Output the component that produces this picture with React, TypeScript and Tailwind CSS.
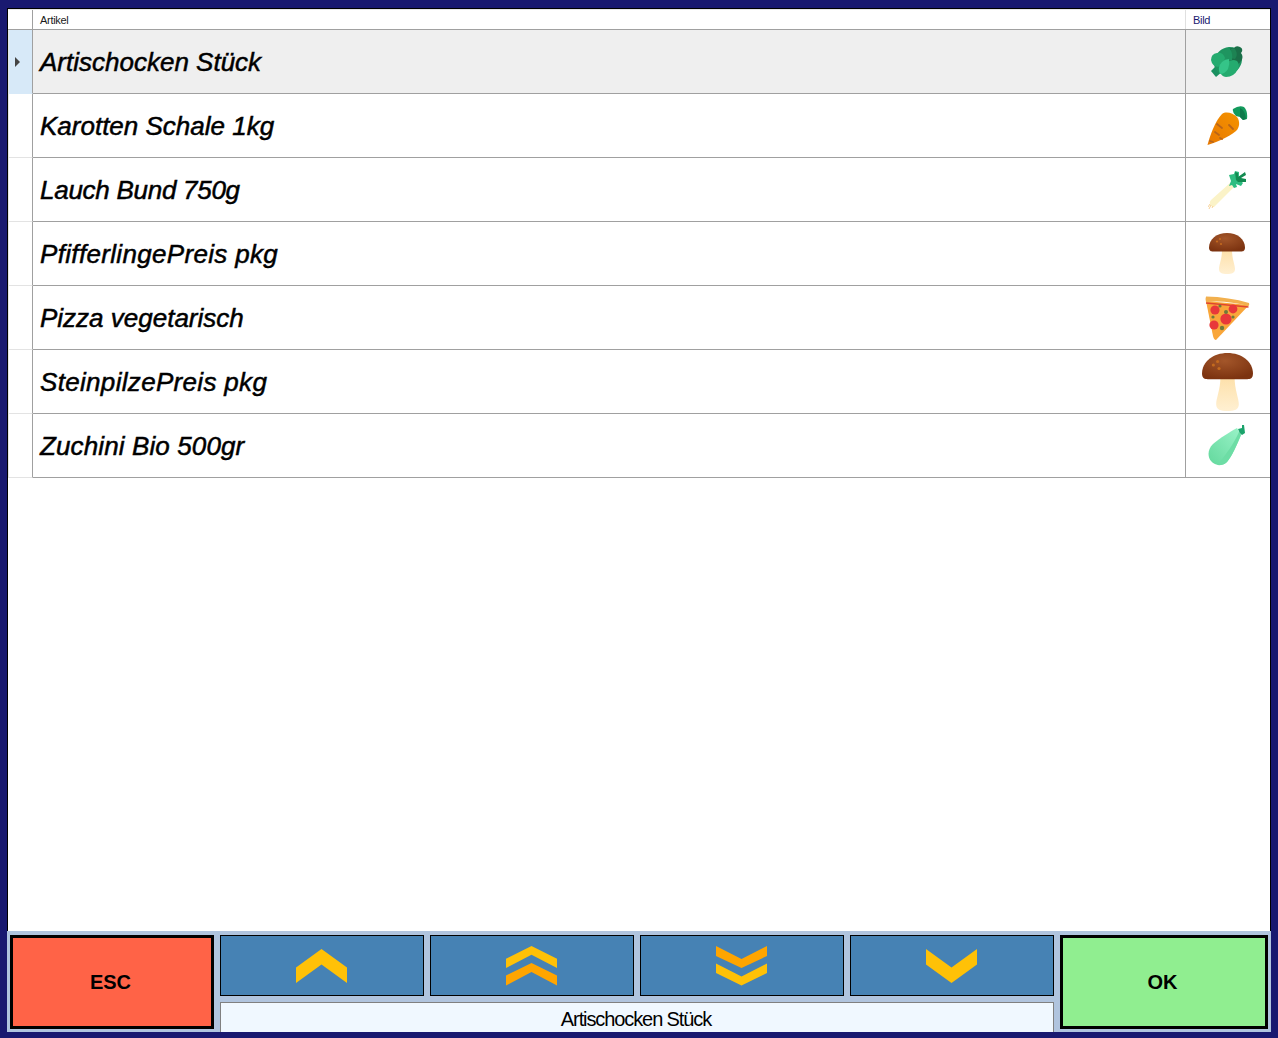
import React from "react";

function Artichoke() {
    return (
        <svg width="32" height="32" viewBox="0 0 32 32">
            <path d="M0 25 L6 19 L12 25 L5 31 Z" fill="#1a9060" />
            <ellipse cx="17" cy="15" rx="15" ry="13" transform="rotate(-45 17 15)" fill="#1e9560" />
            <path d="M17 5 Q19 1 23 2 Q25 -1 29 1 Q33 3 30 7 Q33 11 30 15 Q27 20 21 20 Q16 12 17 5 Z" fill="#1a6f48" />
            <path d="M20 3 Q24 1 25 5 Q27 9 24 13 L19 12 Z" fill="#1d8353" />
            <path d="M10 7 Q14 2 19 3 Q22 7 21 14 L14 14 Z" fill="#1f9560" />
            <path d="M0 14 Q0 8 6 7 Q12 6 14 12 Q13 18 7 21 Q1 20 0 14 Z" fill="#25ab6f" />
            <path d="M15 17 Q21 12 26 15 Q29 18 27 23 Q23 31 15 31 Q10 30 10 27 Z" fill="#25ab6f" />
            <path d="M9 28 Q6 21 11 16 Q14 13 18 13 Q19 18 17 23 Q14 28 9 28 Z" fill="#35c488" />
        </svg>
    );
}

function Carrot() {
    return (
        <svg width="41" height="40" viewBox="0 0 41 40">
            <defs>
                <linearGradient id="carrotBody" x1="0" y1="1" x2="1" y2="0">
                    <stop offset="0" stopColor="#e87800" />
                    <stop offset="1" stopColor="#f59300" />
                </linearGradient>
            </defs>
            <path d="M26 3 Q32 -1 37 1 Q41 5 40 13 L36 14 L33 11 L29 10 Q25 6 26 3 Z" fill="#139a5c" />
            <path d="M33 2 Q38 4 39 13 L36 14 L33 11 Z" fill="#0d7a4a" />
            <path d="M0.5 39 C3 30 8 15 15 8 C19 5 26 7 30 11 C33 15 33 21 29 25 C22 31 8 37 0.5 39 Z" fill="url(#carrotBody)" />
            <g stroke="#b8651a" strokeWidth="1.8" strokeLinecap="round">
                <path d="M10 18 L15 22" />
                <path d="M8 26 L12 29" />
                <path d="M3 35 L6 36" />
                <path d="M22 19 L26 23" />
                <path d="M13 32 L15 33" />
            </g>
        </svg>
    );
}

function Leek() {
    return (
        <svg width="39" height="38" viewBox="0 0 39 38">
            <path d="M22 12 L26 16 L6 36 Q3 36 2 33 Q1 31 3 29 Z" fill="#fbf3c8" />
            <path d="M2 33 L0 36 M3 34 L1 38 M5 35 L4 37" stroke="#f5c77e" strokeWidth="0.8" />
            <path d="M21 4 L26 3 L27 0 L31 1 L31 8 L35 12 L33 15 L28 13 L29 16 L26 17 L24 14 L21 15 L23 10 Z" fill="#2dbd80" />
            <path d="M27 1 L30 2 L30 6 L37 1 L38 4 L33 7 L38 8 L38 11 L30 11 L28 9 Z" fill="#128a50" />
        </svg>
    );
}

function Mushroom({ size }: { size: "sm" | "lg" }) {
    const gradId = size === "sm" ? "capSm" : "capLg";
    const stemId = size === "sm" ? "stemSm" : "stemLg";
    return (
        <svg
            width={size === "sm" ? 36 : 51}
            height={size === "sm" ? 41 : 58}
            viewBox="0 0 36 41"
        >
            <defs>
                <radialGradient id={gradId} cx="0.45" cy="0.3" r="0.7">
                    <stop offset="0" stopColor="#a3562a" />
                    <stop offset="1" stopColor="#7c3310" />
                </radialGradient>
                <linearGradient id={stemId} x1="0" y1="0" x2="0" y2="1">
                    <stop offset="0" stopColor="#fde0aa" />
                    <stop offset="1" stopColor="#fff0d2" />
                </linearGradient>
            </defs>
            <path d="M13 17 L23 17 C23 26 26 32 26 36 C26 40 23 41 18 41 C13 41 10 40 10 36 C10 32 13 26 13 17 Z" fill={`url(#${stemId})`} />
            <path d="M0 14.5 C0 6 8 0 18 0 C28 0 36 6 36 14.5 C36 18 34 18.5 32 18.5 L4 18.5 C2 18.5 0 18 0 14.5 Z" fill={`url(#${gradId})`} />
            <g fill="#c46a1e">
                <circle cx="8" cy="8.5" r="1.1" />
                <circle cx="11" cy="6" r="1.1" />
                <circle cx="12" cy="11" r="1.1" />
            </g>
        </svg>
    );
}

function Pizza() {
    return (
        <svg width="45" height="44" viewBox="0 0 45 44">
            <path d="M1 5 L44 9 L11 44 Q9 44 8 40 Z" fill="#f9a63a" />
            <path d="M1 7 L43.5 11" stroke="#e0452f" strokeWidth="1.4" />
            <path d="M1 0.5 Q24 1 44 7 Q45 9 43 10 Q22 4 1 6 Q0 3 1 0.5 Z" fill="#f2b04e" />
            <g fill="#e8383a">
                <circle cx="10" cy="14" r="4.6" />
                <circle cx="28" cy="13" r="4.4" />
                <circle cx="21" cy="23" r="5.6" />
                <circle cx="9" cy="29" r="4.6" />
            </g>
            <g fill="#6f7a3a">
                <circle cx="15" cy="10" r="1.6" />
                <circle cx="21" cy="16" r="2" />
                <circle cx="28" cy="21" r="1.6" />
                <circle cx="8" cy="21" r="1.6" />
                <circle cx="17" cy="32" r="2.2" />
            </g>
        </svg>
    );
}

function Zucchini() {
    return (
        <svg width="38" height="41" viewBox="0 0 38 41">
            <defs>
                <linearGradient id="zucchiniBody" x1="1" y1="0" x2="0" y2="1">
                    <stop offset="0" stopColor="#9af3c8" />
                    <stop offset="1" stopColor="#63d89d" />
                </linearGradient>
            </defs>
            <path d="M29 3 L33 10 C29 20 24 31 19 37 C15 41 7 41 3 36 C-1 31 0 24 5 19 C12 13 22 7 29 3 Z" fill="url(#zucchiniBody)" />
            <path d="M31 7 L33 10 C29 20 24 31 19 37 C16 40 12 40.5 9 40 C18 30 26 18 31 7 Z" fill="#6ddda5" />
            <path d="M30 4 L34 3 L34 0 L36 0 L37 8 L34 10 Q31 8 30 4 Z" fill="#1aa36b" />
        </svg>
    );
}

function Chevrons({ kind }: { kind: "up" | "pageUp" | "pageDown" | "down" }) {
    if (kind === "up") {
        return (
            <svg width="51" height="34" viewBox="0 0 51 34">
                <path d="M25.5 0 L51 18.5 V34 L25.5 15.5 L0 34 V18.5 Z" fill="#ffc107" />
            </svg>
        );
    }
    if (kind === "down") {
        return (
            <svg width="51" height="34" viewBox="0 0 51 34">
                <path d="M0 0 L25.5 18.5 L51 0 V15.5 L25.5 34 L0 15.5 Z" fill="#ffc107" />
            </svg>
        );
    }
    if (kind === "pageUp") {
        return (
            <svg width="51" height="40" viewBox="0 0 51 40">
                <path d="M25.5 0 L51 12.7 V22 L25.5 8.7 L0 22 V12.7 Z" fill="#ffc107" />
                <path d="M25.5 17 L51 29.5 V39.5 L25.5 26 L0 39.5 V29.5 Z" fill="#ffa500" />
            </svg>
        );
    }
    return (
        <svg width="51" height="40" viewBox="0 0 51 40">
            <path d="M0 0 L25.5 13 L51 0 V10 L25.5 22 L0 10 Z" fill="#ffa500" />
            <path d="M0 17.5 L25.5 30.5 L51 17.5 V27 L25.5 39.5 L0 27 Z" fill="#ffc107" />
        </svg>
    );
}

const items = [
    { name: "Artischocken Stück", tracking: "tracking-normal", icon: <Artichoke /> },
    { name: "Karotten Schale 1kg", tracking: "tracking-normal", icon: <Carrot /> },
    { name: "Lauch Bund 750g", tracking: "tracking-[-0.27px]", icon: <Leek /> },
    { name: "PfifferlingePreis pkg", tracking: "tracking-[0.33px]", icon: <Mushroom size="sm" /> },
    { name: "Pizza vegetarisch", tracking: "tracking-normal", icon: <Pizza /> },
    { name: "SteinpilzePreis pkg", tracking: "tracking-[0.32px]", icon: <Mushroom size="lg" /> },
    { name: "Zuchini Bio 500gr", tracking: "tracking-[0.12px]", icon: <Zucchini /> },
];

const navButtons = ["up", "pageUp", "pageDown", "down"] as const;

export default function App() {
    return (
        <div className="w-[1278px] h-[1038px] overflow-hidden bg-[#191970] flex flex-col pt-2 pb-[6px] px-[7px] font-['Liberation_Sans',sans-serif] text-black">
            <div className="flex-1 min-h-0 bg-white border-t border-x border-black">
                <div className="flex h-[21px] border-t border-t-[#e8e8e8] border-b border-b-[#a0a0a0] text-[11px] tracking-[-0.3px]">
                    <div className="w-[25px] shrink-0 border-r border-[#a0a0a0]" />
                    <div className="flex-1 pl-[7px] leading-[21px] text-[#1a1a1a]">Artikel</div>
                    <div className="w-[85px] shrink-0 pl-[7px] leading-[21px] text-[#191970] border-l border-[#e0e0e0]">Bild</div>
                </div>
                {items.map((item, idx) => (
                    <div key={item.name} className={`flex h-16 ${idx === 0 ? "bg-[#efefef]" : "bg-white"}`}>
                        <div
                            className={`w-[25px] shrink-0 flex items-center pl-[6px] border-l border-l-[#e3e3e3] border-r border-r-[#a0a0a0] border-b ${
                                idx === 0 ? "bg-[#d7e9f8] border-b-[#d7e9f8]" : "bg-white border-b-[#e3e3e3]"
                            }`}
                        >
                            {idx === 0 && (
                                <svg width="5" height="10" viewBox="0 0 5 10">
                                    <path d="M0 0 L5 5 L0 10 Z" fill="#444" />
                                </svg>
                            )}
                        </div>
                        <div className={`flex-1 flex items-center pl-[7px] pt-[2px] border-b border-[#a0a0a0] text-[26px] italic [-webkit-text-stroke:0.5px_black] ${item.tracking}`}>
                            {item.name}
                        </div>
                        <div className="w-[85px] shrink-0 flex items-center justify-center pr-[2px] border-l border-b border-[#a0a0a0]">
                            {item.icon}
                        </div>
                    </div>
                ))}
            </div>
            <div className="h-[101px] shrink-0 bg-[#b0c4de] flex gap-[6px] pl-[3px] pt-1">
                <button className="w-[204px] h-[94px] bg-[#ff6347] border-[3px] border-black pr-[3px] text-[20px] font-bold">
                    ESC
                </button>
                <div className="w-[834px] flex flex-col gap-[6px]">
                    <div className="grid grid-cols-4 gap-[6px] h-[61px]">
                        {navButtons.map((kind) => (
                            <button key={kind} className="bg-[#4682b4] border border-black flex items-center justify-center pr-[2px]">
                                <Chevrons kind={kind} />
                            </button>
                        ))}
                    </div>
                    <div className="h-[30px] bg-[#f0f8ff] border-t border-x border-[#808080] flex items-center justify-center pt-[2px] pr-[2px] text-[20px] tracking-[-1.1px]">
                        Artischocken Stück
                    </div>
                </div>
                <button className="w-[208px] h-[94px] bg-[#90ee90] border-[3px] border-black pr-[3px] text-[20px] font-bold">
                    OK
                </button>
            </div>
        </div>
    );
}
